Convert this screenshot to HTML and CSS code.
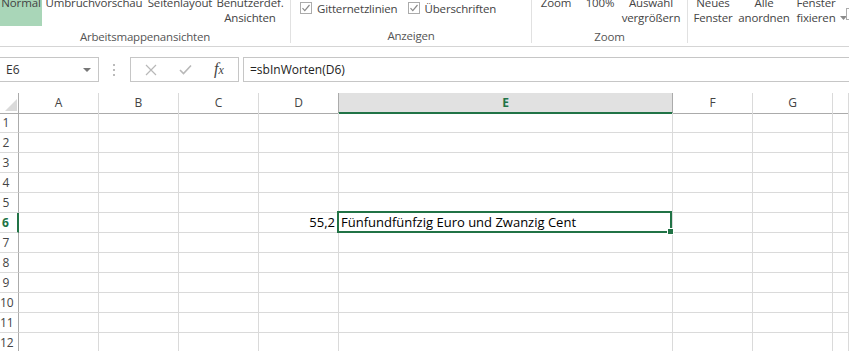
FILE: index.html
```html
<!DOCTYPE html>
<html lang="de">
<head>
    <meta charset="UTF-8">
    <title>Mappe1 - Excel</title>
    <link rel="stylesheet" href="styles.css">
</head>
<body>

    <!-- Menüband: Ansicht -->
    <div class="ribbon">
        <div class="group group-views">
            <div class="items">
                <div class="btn btn-normal"><span>Normal</span></div>
                <div class="btn btn-break"><span>Umbruchvorschau</span></div>
                <div class="btn btn-layout"><span>Seitenlayout</span></div>
                <div class="btn btn-custom"><span>Benutzerdef.</span><span>Ansichten</span></div>
            </div>
            <div class="label">Arbeitsmappenansichten</div>
        </div>

        <div class="group group-show">
            <div class="items checks">
                <label class="check">
                    <svg width="12" height="12" viewBox="0 0 12 12"><rect x="0.5" y="0.5" width="11" height="11" fill="#fff" stroke="#ababab"/><path d="M2.5 6.2 L4.8 8.6 L9.5 3" fill="none" stroke="#8a8a8a" stroke-width="1.2"/></svg>
                    Gitternetzlinien
                </label>
                <label class="check">
                    <svg width="12" height="12" viewBox="0 0 12 12"><rect x="0.5" y="0.5" width="11" height="11" fill="#fff" stroke="#ababab"/><path d="M2.5 6.2 L4.8 8.6 L9.5 3" fill="none" stroke="#8a8a8a" stroke-width="1.2"/></svg>
                    Überschriften
                </label>
            </div>
            <div class="label">Anzeigen</div>
        </div>

        <div class="group group-zoom">
            <div class="items">
                <div class="btn btn-zoom"><span>Zoom</span></div>
                <div class="btn btn-100"><span>100%</span></div>
                <div class="btn btn-fit"><span>Auswahl</span><span>vergrößern</span></div>
            </div>
            <div class="label">Zoom</div>
        </div>

        <div class="group group-window">
            <div class="items">
                <div class="btn btn-new"><span>Neues</span><span>Fenster</span></div>
                <div class="btn btn-arrange"><span>Alle</span><span>anordnen</span></div>
                <div class="btn btn-freeze"><span>Fenster</span><span>fixieren<svg width="7" height="4" viewBox="0 0 7 4"><path d="M0 0 H7 L3.5 4 Z" fill="#8a8a8a"/></svg></span></div>
                <div class="box-partial"></div>
            </div>
        </div>
    </div>

    <!-- Bearbeitungsleiste -->
    <div class="formula-bar">
        <div class="name-box">
            <span>E6</span>
            <svg width="8" height="4" viewBox="0 0 8 4"><path d="M0 0 H8 L4 4 Z" fill="#777"/></svg>
        </div>
        <div class="grip">
            <svg width="3" height="12" viewBox="0 0 3 12"><rect x="0" y="0" width="2" height="2" fill="#bbb"/><rect x="0" y="5" width="2" height="2" fill="#bbb"/><rect x="0" y="10" width="2" height="2" fill="#bbb"/></svg>
        </div>
        <div class="fx-buttons">
            <svg width="12" height="12" viewBox="0 0 12 12"><path d="M1 1 L11 11 M11 1 L1 11" stroke="#b8b8b8" stroke-width="1.2"/></svg>
            <svg width="13" height="11" viewBox="0 0 13 11"><path d="M1 6 L4.5 9.5 L12 1.5" fill="none" stroke="#b8b8b8" stroke-width="1.6"/></svg>
            <span class="fx">f<small>x</small></span>
        </div>
        <div class="formula-input">=sbInWorten(D6)</div>
    </div>

    <!-- Tabellenblatt -->
    <div class="sheet">
        <div class="row head">
            <div class="corner"><svg width="12" height="12" viewBox="0 0 12 12"><path d="M12 0 V12 H0 Z" fill="#dadada"/></svg></div>
            <div>A</div><div>B</div><div>C</div><div>D</div><div class="sel">E</div><div>F</div><div>G</div><div></div>
        </div>
        <div class="row"><div class="num">1</div><div></div><div></div><div></div><div></div><div></div><div></div><div></div><div></div></div>
        <div class="row"><div class="num">2</div><div></div><div></div><div></div><div></div><div></div><div></div><div></div><div></div></div>
        <div class="row"><div class="num">3</div><div></div><div></div><div></div><div></div><div></div><div></div><div></div><div></div></div>
        <div class="row"><div class="num">4</div><div></div><div></div><div></div><div></div><div></div><div></div><div></div><div></div></div>
        <div class="row"><div class="num">5</div><div></div><div></div><div></div><div></div><div></div><div></div><div></div><div></div></div>
        <div class="row">
            <div class="num sel">6</div><div></div><div></div><div></div>
            <div class="value">55,2</div>
            <div class="active">Fünfundfünfzig Euro und Zwanzig Cent<span class="selection"><span class="handle"></span></span></div>
            <div></div><div></div><div></div>
        </div>
        <div class="row"><div class="num">7</div><div></div><div></div><div></div><div></div><div></div><div></div><div></div><div></div></div>
        <div class="row"><div class="num">8</div><div></div><div></div><div></div><div></div><div></div><div></div><div></div><div></div></div>
        <div class="row"><div class="num">9</div><div></div><div></div><div></div><div></div><div></div><div></div><div></div><div></div></div>
        <div class="row"><div class="num">10</div><div></div><div></div><div></div><div></div><div></div><div></div><div></div><div></div></div>
        <div class="row"><div class="num">11</div><div></div><div></div><div></div><div></div><div></div><div></div><div></div><div></div></div>
        <div class="row"><div class="num">12</div><div></div><div></div><div></div><div></div><div></div><div></div><div></div><div></div></div>
    </div>

</body>
</html>
```

FILE: styles.css
```css
body {
    margin: 0;
    background-color: #ffffff;
    color: #444444;
    font-family: 'Open Sans', 'Noto Sans', sans-serif;
    font-size: 12px;
    overflow: hidden;
}

/* Menüband */
.ribbon {
    display: flex;
    height: 46px;
    border-bottom: 1px solid #d5d5d5;
    overflow: hidden;
    font-size: 11.5px;
    letter-spacing: -0.15px;
}

.group {
    display: flex;
    flex-direction: column;
    flex-shrink: 0;
    border-right: 1px solid #e1e1e1;
    margin-bottom: 3px;
}

.group-views {
    width: 290px;
}

.group-show {
    width: 240px;
}

.group-zoom {
    width: 155px;
}

.group-window {
    flex: 1 1 0;
    min-width: 0;
    border-right: none;
}

.items {
    display: flex;
    height: 35px;
    margin-top: -5px;
}

.label {
    text-align: center;
    line-height: 15px;
    color: #555555;
    letter-spacing: -0.2px;
}

.btn {
    display: flex;
    flex-direction: column;
    align-items: center;
    flex-shrink: 0;
    line-height: 15px;
    height: 34px;
}

.btn span {
    white-space: nowrap;
}

.btn-normal {
    width: 42px;
    height: 31px;
    background-color: #a9d6b8;
}

.btn-break {
    width: 104px;
}

.btn-layout {
    width: 68px;
}

.btn-custom {
    width: 72px;
}

.btn-zoom {
    width: 48px;
}

.btn-100 {
    width: 40px;
}

.btn-fit {
    width: 62px;
}

.btn-new {
    width: 50px;
}

.btn-arrange {
    width: 52px;
}

.btn-freeze {
    width: 52px;
}

.btn-freeze svg {
    margin: 0 -11px 2px 4px;
    vertical-align: middle;
}

.checks {
    margin-top: 0;
    height: 30px;
    padding-left: 9px;
    gap: 10px;
}

.check {
    display: flex;
    align-items: center;
    gap: 5px;
    height: 16px;
}

.box-partial {
    flex-shrink: 0;
    width: 12px;
    height: 12px;
    margin-left: 4px;
    margin-top: 13px;
    border: 1px solid #ababab;
    box-sizing: border-box;
}

/* Bearbeitungsleiste */
.formula-bar {
    display: flex;
    align-items: flex-start;
    height: 46px;
    padding-top: 10px;
    box-sizing: border-box;
}

.name-box {
    display: flex;
    align-items: center;
    justify-content: space-between;
    width: 100px;
    height: 25px;
    margin-left: -1px;
    padding: 0 7px 0 6px;
    box-sizing: border-box;
    border: 1px solid #c6c6c6;
    color: #333333;
}

.grip {
    display: flex;
    align-items: center;
    height: 25px;
    margin: 0 14px 0 14px;
}

.fx-buttons {
    display: flex;
    align-items: center;
    gap: 22px;
    height: 25px;
    width: 109px;
    padding-left: 14px;
    box-sizing: border-box;
    border: 1px solid #c6c6c6;
}

.fx {
    font-family: 'Liberation Serif', serif;
    font-style: italic;
    font-size: 16px;
    line-height: 16px;
    color: #444444;
    margin-left: 0;
}

.fx small {
    font-size: 12px;
}

.formula-input {
    flex: 1;
    height: 25px;
    margin-left: 4px;
    padding-left: 6px;
    line-height: 23px;
    box-sizing: border-box;
    border: 1px solid #c6c6c6;
    border-right: none;
    color: #222222;
    font-size: 12px;
}

/* Tabellenblatt */
.row {
    display: grid;
    grid-template-columns: 19px 80px 80px 80px 80px 334px 80px 80px 1fr;
    height: 20px;
}

.row div {
    border-right: 1px solid #dadada;
    border-bottom: 1px solid #dadada;
    line-height: 19px;
    white-space: nowrap;
}

.head div {
    text-align: center;
    color: #444444;
    font-size: 12px;
    border-bottom-color: #ababab;
}

.head .corner {
    display: flex;
    align-items: flex-end;
    justify-content: flex-end;
    padding: 0 1px 2px 0;
    border-right-color: #ababab;
}

.head .sel {
    background-color: #e1e1e1;
    color: #217346;
    font-weight: bold;
    border-bottom: 2px solid #217346;
    border-left: 1px solid #ababab;
    margin-left: -1px;
    border-right-color: #ababab;
}

.row .num {
    text-align: center;
    padding-right: 6px;
    font-size: 12px;
    color: #444444;
    border-right-color: #ababab;
}

.row .num.sel {
    color: #217346;
    font-weight: bold;
    border-right: 2px solid #217346;
}

.value {
    text-align: right;
    padding-right: 3px;
    color: #000000;
    font-size: 13px;
}

.active {
    position: relative;
    padding-left: 2px;
    color: #000000;
    font-size: 13px;
}

.selection {
    position: absolute;
    top: -2px;
    left: -2px;
    right: 0;
    bottom: -1px;
    border: 2px solid #217346;
}

.handle {
    position: absolute;
    right: -4px;
    bottom: -4px;
    width: 5px;
    height: 5px;
    background-color: #217346;
    border: 1px solid #ffffff;
}
```
